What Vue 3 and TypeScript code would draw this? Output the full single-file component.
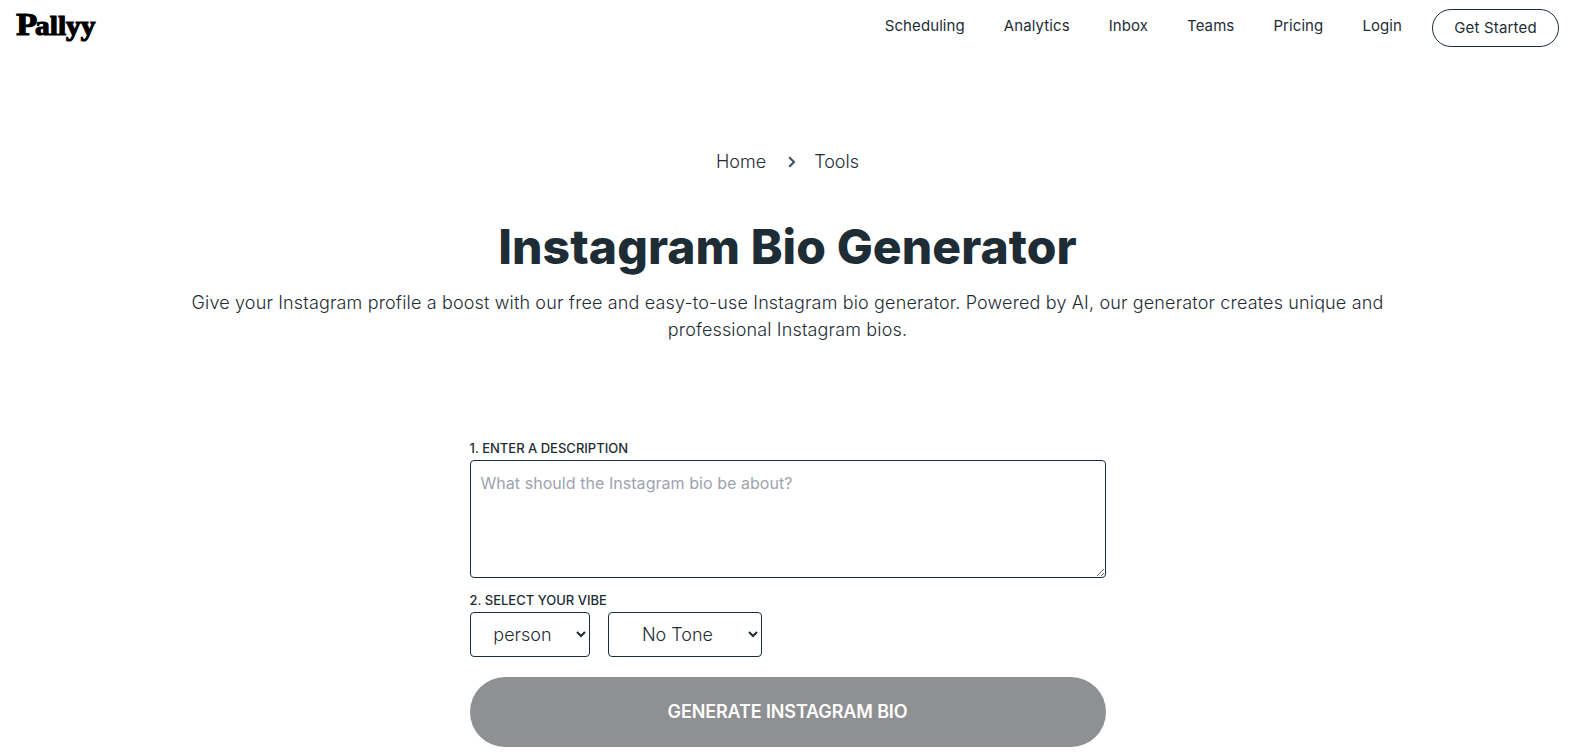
<script setup lang="ts">
import { ref } from 'vue'

interface NavItem {
  label: string
}

const navItems: NavItem[] = [
  { label: 'Scheduling' },
  { label: 'Analytics' },
  { label: 'Inbox' },
  { label: 'Teams' },
  { label: 'Pricing' },
  { label: 'Login' },
]

const description = ref<string>('')
const subject = ref<string>('person')
const tone = ref<string>('No Tone')
</script>

<template>
  <div class="page">
    <header class="header">
      <a class="logo" aria-label="Pallyy">
        <svg width="90" height="54" viewBox="0 0 90 54">
          <text class="logo-cap" x="1.2" y="35.2" textLength="21" lengthAdjust="spacingAndGlyphs">P</text>
          <text class="logo-rest" x="20" y="35.2" textLength="60.5" lengthAdjust="spacingAndGlyphs">allyy</text>
        </svg>
      </a>
      <nav class="nav">
        <a v-for="item in navItems" :key="item.label" class="nav-link">{{ item.label }}</a>
        <a class="get-started">Get Started</a>
      </nav>
    </header>

    <main class="main">
      <div class="breadcrumb">
        <a>Home</a>
        <svg class="chevron" width="8" height="12" viewBox="0 0 8 12">
          <path d="M1.2 1.2 L6 6 L1.2 10.8" />
        </svg>
        <a>Tools</a>
      </div>
      <h1 class="title">Instagram Bio Generator</h1>
      <p class="intro">
        Give your Instagram profile a boost with our free and easy-to-use Instagram bio generator.
        Powered by AI, our generator creates unique and professional Instagram bios.
      </p>

      <form class="form" @submit.prevent>
        <label class="label" for="description">1. Enter a description</label>
        <textarea
          id="description"
          v-model="description"
          class="description"
          placeholder="What should the Instagram bio be about?"
        ></textarea>
        <label class="label vibe-label" for="subject">2. Select your vibe</label>
        <div class="selects">
          <select id="subject" v-model="subject" class="select subject">
            <option>person</option>
          </select>
          <select v-model="tone" class="select tone">
            <option>No Tone</option>
          </select>
        </div>
        <button class="generate" type="submit">Generate Instagram Bio</button>
      </form>
    </main>
  </div>
</template>

<style>
body {
  background: #fff;
}
</style>

<style scoped>
.page {
  height: 756px;
  overflow: hidden;
  font-family: Inter, 'Liberation Sans', sans-serif;
  color: #1e2d35;
}
.page * {
  box-sizing: border-box;
}
.header {
  display: flex;
  justify-content: space-between;
  align-items: flex-start;
  height: 56px;
  padding: 0 14px 0 15px;
}
.logo {
  display: block;
  height: 54px;
}
.logo text {
  font-family: 'Liberation Serif', serif;
  font-weight: 700;
  fill: #000;
  stroke: #000;
  stroke-width: 1.2px;
}
.logo .logo-cap {
  font-size: 30.5px;
}
.logo .logo-rest {
  font-size: 28px;
}
.nav {
  display: flex;
  align-items: flex-start;
  padding-top: 9px;
}
.nav-link {
  margin-right: 39px;
  padding-top: 5px;
  font-size: 15px;
  line-height: 24px;
  letter-spacing: 0.09px;
}
.nav-link:nth-last-child(2) {
  margin-right: 30px;
}
.get-started {
  width: 127px;
  height: 38px;
  border: 1px solid #1e2d35;
  border-radius: 19px;
  font-size: 15px;
  line-height: 36px;
  letter-spacing: 0.17px;
  text-align: center;
}
.main {
  display: flex;
  flex-direction: column;
  align-items: center;
  padding: 91px 0 0 2px;
}
.breadcrumb {
  display: flex;
  align-items: center;
  height: 28px;
  font-size: 18px;
  font-weight: 300;
}
.chevron {
  margin: 2px 18px 0 22px;
}
.chevron path {
  fill: none;
  stroke: #3f4c53;
  stroke-width: 2;
}
.title {
  margin: 42px 0 0;
  font-size: 48px;
  font-weight: 800;
  line-height: 60px;
  letter-spacing: 0.07px;
}
.intro {
  width: 1200px;
  margin: 12px 0 0;
  font-size: 18px;
  font-weight: 300;
  line-height: 27px;
  letter-spacing: 0.15px;
  text-align: center;
}
.form {
  display: flex;
  flex-direction: column;
  width: 636px;
  margin-top: 96px;
}
.label {
  height: 21px;
  font-size: 13px;
  font-weight: 500;
  line-height: 18px;
  text-transform: uppercase;
}
.description {
  display: block;
  width: 100%;
  height: 118px;
  padding: 10px;
  border: 1px solid #1e2d35;
  border-radius: 4px;
  background: #fff;
  font-family: inherit;
  font-size: 16px;
  line-height: 24px;
  letter-spacing: 0.05px;
  color: #1e2d35;
}
.description::placeholder {
  color: #9ca3af;
}
.vibe-label {
  margin-top: 13px;
}
.selects {
  display: flex;
  gap: 18px;
}
.select {
  height: 45px;
  padding: 0 2px 0 0;
  border: 1px solid #1e2d35;
  border-radius: 4px;
  background: #fff;
  font-family: inherit;
  font-size: 18px;
  font-weight: 300;
  color: #1e2d35;
  text-align: center;
}
.subject {
  width: 120px;
}
.tone {
  width: 154px;
}
.generate {
  height: 70px;
  margin-top: 20px;
  padding: 0 6px 2px;
  border: 0;
  border-radius: 35px;
  background: #8f9092;
  font-family: inherit;
  font-size: 18px;
  font-weight: 600;
  letter-spacing: -0.13px;
  color: #fff;
  text-transform: uppercase;
}
</style>
